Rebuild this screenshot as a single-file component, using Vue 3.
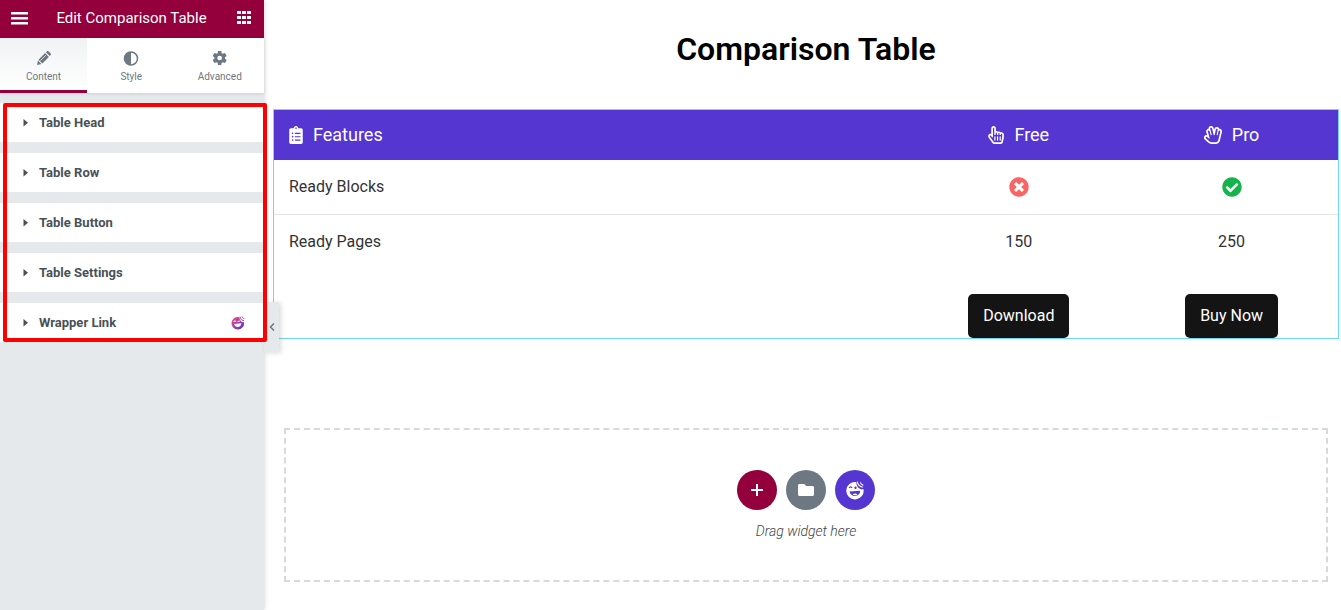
<script setup>
import { ref } from 'vue'

const activeTab = ref('Content')
const tabs = ['Content', 'Style', 'Advanced']
const sections = ['Table Head', 'Table Row', 'Table Button', 'Table Settings', 'Wrapper Link']
</script>

<template>
  <div class="editor">
    <aside class="panel">
      <header class="panel-head">
        <button class="bare" type="button" aria-label="Menu">
          <svg width="18" height="18" viewBox="0 0 18 18" fill="currentColor">
            <path d="M1 3h17v2.400H1zM1 8h17v2.400H1zM1 13h17v2.400H1z" />
          </svg>
        </button>
        <h2>Edit Comparison Table</h2>
        <button class="bare" type="button" aria-label="Widgets">
          <svg width="14" height="14" viewBox="0 0 14 14" fill="currentColor">
            <path d="M0 0h4v3H0zM5 0h4v3H5zM10 0h4v3h-4zM0 5h4v3H0zM5 5h4v3H5zM10 5h4v3h-4zM0 10h4v3H0zM5 10h4v3H5zM10 10h4v3h-4z" />
          </svg>
        </button>
      </header>

      <nav class="tabs">
        <button
          v-for="tab in tabs"
          :key="tab"
          type="button"
          class="tab"
          :class="{ active: tab === activeTab }"
          @click="activeTab = tab"
        >
          <svg v-if="tab === 'Content'" width="16" height="16" viewBox="0 0 16 16" fill="currentColor">
            <path d="M1 15l.9-4.400 3.500 3.500zM2.500 9.700l6.600-6.600 3.800 3.800L6.300 13.500zM9.900 2.300l.8-.8c.6-.6 1.400-.6 2 0l1.800 1.800c.6.6.6 1.400 0 2l-.8.8z" />
            <path d="M4.300 10.700l5.500-5.500" stroke="#fff" stroke-width=".7" />
          </svg>
          <svg v-else-if="tab === 'Style'" width="16" height="16" viewBox="0 0 16 16">
            <circle cx="8" cy="8.500" r="6.500" fill="none" stroke="currentColor" stroke-width="1.500" />
            <path d="M8 2a6.500 6.500 0 0 0 0 13z" fill="currentColor" />
          </svg>
          <svg v-else width="16" height="16" viewBox="0 0 24 24" fill="currentColor">
            <path fill-rule="evenodd" d="M19.400 13c.1-.3.1-.6.1-1s0-.7-.1-1l2.300-1.700c.2-.2.300-.5.1-.7l-2.200-3.800c-.1-.2-.4-.3-.7-.2l-2.600 1.100c-.6-.4-1.100-.8-1.800-1l-.4-2.800c0-.3-.2-.4-.5-.4H9.400c-.3 0-.5.1-.5.400l-.4 2.800c-.7.2-1.200.6-1.800 1L4.100 4.600c-.3-.1-.6 0-.7.2L1.200 8.600c-.1.2-.1.5.1.7L3.600 11c-.1.3-.1.6-.1 1s0 .7.1 1l-2.300 1.700c-.2.2-.2.5-.1.7l2.200 3.800c.1.2.4.3.7.2l2.600-1.100c.6.4 1.100.8 1.800 1l.4 2.800c0 .3.2.4.5.4h4.200c.3 0 .5-.1.5-.4l.4-2.800c.7-.2 1.200-.6 1.800-1l2.600 1.100c.3.1.6 0 .7-.2l2.200-3.800c.2-.2.1-.5-.1-.7zM11.500 15.500a3.500 3.500 0 1 1 0-7 3.500 3.500 0 0 1 0 7z" />
          </svg>
          <span>{{ tab }}</span>
        </button>
      </nav>

      <div class="sections">
        <button v-for="name in sections" :key="name" type="button" class="section">
          <svg class="caret" width="5" height="8" viewBox="0 0 5 8" fill="currentColor"><path d="M.5 0L5 3.700 .5 7.400z" /></svg>
          <span>{{ name }}</span>
          <svg v-if="name === 'Wrapper Link'" class="happy-mark" width="14" height="14" viewBox="0 0 20 20">
            <defs>
              <linearGradient id="happy" x1="0" y1="0" x2="1" y2="1">
                <stop offset=".15" stop-color="#e2498a" />
                <stop offset="1" stop-color="#562dd4" />
              </linearGradient>
            </defs>
            <path fill="url(#happy)" d="M12 1.700A9 9 0 1 0 18.600 9c-3.300.4-6.300-2.500-6.600-7.300z" />
            <path d="M13 1c.2 3.200 2.200 5.300 5.600 5.700M16 .8c.2 1.600 1.200 2.600 3 3" fill="none" stroke="#a23cae" stroke-width="1.400" />
            <path fill="#fff" d="M4.500 11.300l10.300-.8c0 6.500-9.300 7-10.300.8z" />
            <path d="M4 8.300c.6-1.700 2.400-1.700 3 0M9.500 7.800l3-.8" stroke="#fff" stroke-width="1.500" fill="none" />
          </svg>
        </button>
      </div>

      <button class="collapse" type="button" aria-label="Hide panel">
        <svg width="6" height="8" viewBox="0 0 6 8" fill="none" stroke="currentColor" stroke-width="1.500"><path d="M5 .5L1.500 4 5 7.500" /></svg>
      </button>
    </aside>

    <main class="canvas">
      <h1>Comparison Table</h1>

      <div class="widget">
        <table>
          <thead>
            <tr>
              <th scope="col">
                <span class="label">
                  <svg width="14" height="18" viewBox="0 0 384 512" fill="currentColor"><path d="M336 64h-80c0-35.300-28.700-64-64-64s-64 28.700-64 64H48C21.500 64 0 85.500 0 112v352c0 26.500 21.500 48 48 48h288c26.500 0 48-21.500 48-48V112c0-26.500-21.500-48-48-48zM96 424c-13.300 0-24-10.700-24-24s10.700-24 24-24 24 10.700 24 24-10.700 24-24 24zm0-96c-13.300 0-24-10.700-24-24s10.700-24 24-24 24 10.700 24 24-10.700 24-24 24zm0-96c-13.300 0-24-10.700-24-24s10.700-24 24-24 24 10.700 24 24-10.700 24-24 24zm96-192c13.300 0 24 10.700 24 24s-10.700 24-24 24-24-10.700-24-24 10.700-24 24-24zm128 368c0 4.400-3.600 8-8 8H168c-4.400 0-8-3.600-8-8v-16c0-4.400 3.600-8 8-8h144c4.400 0 8 3.600 8 8v16zm0-96c0 4.400-3.600 8-8 8H168c-4.400 0-8-3.600-8-8v-16c0-4.400 3.600-8 8-8h144c4.400 0 8 3.600 8 8v16zm0-96c0 4.400-3.600 8-8 8H168c-4.400 0-8-3.600-8-8v-16c0-4.400 3.600-8 8-8h144c4.400 0 8 3.600 8 8v16z" /></svg>
                  Features
                </span>
              </th>
              <th scope="col">
                <span class="label">
                  <svg width="16" height="18" viewBox="0 0 448 512" fill="currentColor"><path d="M358.182 179.361c-19.493-24.768-52.679-31.945-79.872-19.098-15.127-15.687-36.182-22.487-56.595-19.629V67c0-36.944-29.736-67-66.286-67S89.143 30.056 89.143 67v161.129c-19.909-7.410-43.272-5.094-62.083 8.872-29.355 21.795-35.793 63.333-14.550 93.152l109.699 154.001C134.632 501.590 154.741 512 176 512h178.286c30.802 0 57.574-21.500 64.557-51.797l27.429-118.999A67.873 67.873 0 0 0 448 326v-84c0-46.844-46.625-79.273-89.818-62.639zM80.985 279.697l27.126 38.079c8.995 12.626 29.031 6.287 29.031-9.283V67c0-25.120 36.571-25.160 36.571 0v175c0 8.836 7.163 16 16 16h6.857c8.837 0 16-7.164 16-16v-35c0-25.120 36.571-25.160 36.571 0v35c0 8.836 7.163 16 16 16H272c8.837 0 16-7.164 16-16v-21c0-25.120 36.571-25.160 36.571 0v21c0 8.836 7.163 16 16 16h6.857c8.837 0 16-7.164 16-16 0-25.121 36.571-25.160 36.571 0v84c0 1.488-.169 2.977-.502 4.423l-27.430 119.001c-1.978 8.582-9.290 14.576-17.782 14.576H176c-5.769 0-11.263-2.878-14.697-7.697l-109.712-154c-14.406-20.223 14.994-42.818 29.394-22.606zM176.143 400v-96c0-8.837 6.268-16 14-16h6c7.732 0 14 7.163 14 16v96c0 8.837-6.268 16-14 16h-6c-7.733 0-14-7.163-14-16zm75.428 0v-96c0-8.837 6.268-16 14-16h6c7.732 0 14 7.163 14 16v96c0 8.837-6.268 16-14 16h-6c-7.732 0-14-7.163-14-16zM327 400v-96c0-8.837 6.268-16 14-16h6c7.732 0 14 7.163 14 16v96c0 8.837-6.268 16-14 16h-6c-7.732 0-14-7.163-14-16z" /></svg>
                  Free
                </span>
              </th>
              <th scope="col">
                <span class="label">
                  <svg width="18" height="18" viewBox="0 0 512 512" fill="currentColor"><path d="M501.030 116.176c-19.390-31.508-51.244-35.728-66.310-35.018-14.113-50.810-62.004-54.080-70.738-54.080a74.031 74.031 0 0 0-72.238 58.916l-4.646 22.660-13.684-53.207c-9.096-35.371-46.412-64.051-89.660-53.072a73.897 73.897 0 0 0-55.121 78.947 73.683 73.683 0 0 0-64.850 94.422l24.359 82.197c-38.240-7.545-62.797 16.184-68.115 21.848a73.679 73.679 0 0 0 3.199 104.193l91.365 85.977A154.164 154.164 0 0 0 220.623 512h107.455a127.301 127.301 0 0 0 124.261-98.139l57.623-241.963a73.203 73.203 0 0 0-8.932-55.722zm-37.760 44.605L405.648 402.748a79.466 79.466 0 0 1-77.570 61.260H220.623a106.341 106.341 0 0 1-73.137-28.998l-91.369-85.980c-24.773-23.303 10.494-60.899 35.279-37.491l51.123 48.107c5.426 5.109 13.482.717 13.482-5.826a246.799 246.799 0 0 0-10.178-70.152l-36.014-121.539c-9.732-32.883 39.699-47.271 49.387-14.625l31.344 105.779c5.594 18.904 33.781 10.713 28.965-8.008L177.064 80.237c-8.504-33.104 41.432-45.646 49.865-12.836l47.326 184.035c4.428 17.242 29.162 16.504 32.711-.805l31.791-154.971c6.811-33.108 57.517-24.107 50.119 11.963l-28.549 139.166c-3.723 18.109 23.668 24.631 28.057 6.217L413.185 148.860c7.840-33.348 57.946-21.122 50.085 11.921z" /></svg>
                  Pro
                </span>
              </th>
            </tr>
          </thead>
          <tbody>
            <tr>
              <td>Ready Blocks</td>
              <td>
                <svg class="no" role="img" aria-label="Not included" width="20" height="20" viewBox="0 0 512 512" fill="currentColor"><path d="M256 8C119 8 8 119 8 256s111 248 248 248 248-111 248-248S393 8 256 8zm121.600 313.100c4.700 4.700 4.700 12.300 0 17L338 377.600c-4.700 4.700-12.300 4.700-17 0L256 312l-65.100 65.600c-4.700 4.700-12.300 4.700-17 0L134.400 338c-4.700-4.700-4.700-12.300 0-17l65.600-65-65.600-65.100c-4.700-4.700-4.700-12.300 0-17l39.600-39.600c4.700-4.700 12.300-4.700 17 0l65 65.700 65.100-65.600c4.700-4.700 12.300-4.700 17 0l39.600 39.600c4.700 4.700 4.700 12.300 0 17L312 256l65.600 65.100z" /></svg>
              </td>
              <td>
                <svg class="yes" role="img" aria-label="Included" width="20" height="20" viewBox="0 0 512 512" fill="currentColor"><path d="M504 256c0 136.967-111.033 248-248 248S8 392.967 8 256 119.033 8 256 8s248 111.033 248 248zM227.314 387.314l184-184c6.248-6.248 6.248-16.379 0-22.627l-22.627-22.627c-6.248-6.249-16.379-6.249-22.628 0L216 308.118l-70.059-70.059c-6.248-6.248-16.379-6.248-22.628 0l-22.627 22.627c-6.248 6.248-6.248 16.379 0 22.627l104 104c6.249 6.249 16.379 6.249 22.628.001z" /></svg>
              </td>
            </tr>
            <tr>
              <td>Ready Pages</td>
              <td>150</td>
              <td>250</td>
            </tr>
          </tbody>
          <tfoot>
            <tr>
              <td></td>
              <td><a class="buy" href="#">Download</a></td>
              <td><a class="buy" href="#">Buy Now</a></td>
            </tr>
          </tfoot>
        </table>
      </div>

      <section class="dropzone">
        <div class="actions">
          <button class="round add" type="button" aria-label="Add section">
            <svg width="14" height="14" viewBox="0 0 14 14" fill="currentColor"><path d="M6 1h2v5h5v2H8v5H6V8H1V6h5z" /></svg>
          </button>
          <button class="round folder" type="button" aria-label="Add template">
            <svg width="16" height="14" viewBox="0 0 16 14" fill="currentColor"><path d="M1.500 1h5l1.500 2h6.500c.8 0 1.500.7 1.500 1.500v7c0 .8-.7 1.500-1.500 1.500h-13C.7 13 0 12.300 0 11.500v-9C0 1.700.7 1 1.500 1z" /></svg>
          </button>
          <button class="round happy" type="button" aria-label="Add Happy template">
            <svg width="20" height="20" viewBox="0 0 20 20">
              <path fill="#fff" d="M11.300 2.200A8.700 8.700 0 1 0 18.500 9.200c-4 .6-7-2.200-7.200-7z" />
              <path d="M12.300 1.600c.4 3 2.300 5 5.500 5.600M15.300 2.400c.5 1.500 1.500 2.500 3.100 2.900" fill="none" stroke="#fff" stroke-width="1.100" />
              <path fill="#5636d1" d="M4.500 11.500l10.700-.7c-.2 6.500-9.500 7-10.700.7z" />
              <path fill="#fff" d="M7.500 14.500c1.500-1.200 3.500-1.200 5-.3-1.300 1.400-3.500 1.500-5 .3z" />
              <path d="M4.200 8c.6-1.500 2.200-1.500 2.800 0" stroke="#5636d1" stroke-width="1.200" fill="none" />
              <circle cx="10.500" cy="7.800" r="1.200" fill="#5636d1" />
            </svg>
          </button>
        </div>
        <p>Drag widget here</p>
      </section>
    </main>
  </div>
</template>

<style>
body {
  margin: 0;
  background: #fff;
}
</style>

<style scoped>
.editor {
  display: flex;
  min-height: 100vh;
  font-family: Roboto, "Liberation Sans", sans-serif;
}

button {
  margin: 0;
  padding: 0;
  border: 0;
  background: none;
  font-family: inherit;
  cursor: pointer;
}

svg {
  display: block;
  flex: none;
}

.panel {
  position: relative;
  z-index: 1;
  flex: none;
  box-sizing: border-box;
  width: 264px;
  background: #e6e9ec;
  box-shadow: 0 0 5px rgba(0, 0, 0, 0.2);
}

.panel-head {
  display: flex;
  align-items: center;
  justify-content: space-between;
  box-sizing: border-box;
  height: 38px;
  padding: 0 13px 2px 10px;
  background: #93003c;
  color: #fff;
}

.bare {
  color: inherit;
}

.panel-head h2 {
  margin: 0;
  padding-right: 2px;
  font-size: 15px;
  font-weight: 400;
  line-height: 20px;
}

.tabs {
  display: grid;
  grid-template-columns: 87px 1fr 1fr;
  background: #fff;
  box-shadow: 0 1px 3px rgba(0, 0, 0, 0.1);
}

.tab {
  display: flex;
  flex-direction: column;
  align-items: center;
  gap: 4px;
  height: 55px;
  padding-top: 12px;
  box-sizing: border-box;
  border-bottom: 3px solid transparent;
  color: #6d7882;
  font-size: 10px;
  line-height: 13px;
}

.tab.active {
  border-color: #93003c;
  background: linear-gradient(#f1f2f4, #fff);
}

.sections {
  position: relative;
  display: flex;
  flex-direction: column;
  gap: 11px;
  margin-top: 10px;
}

.sections::after {
  position: absolute;
  inset: 0 -3px 0 3px;
  border: 4px solid #f00;
  border-radius: 2px;
  content: "";
  pointer-events: none;
}

.section {
  display: flex;
  align-items: center;
  gap: 11px;
  height: 39px;
  padding: 0 19px 0 23px;
  background: #fff;
  color: #495157;
  font-size: 13px;
  font-weight: 700;
  line-height: 16px;
}

.happy-mark {
  margin-left: auto;
}

.collapse {
  position: absolute;
  top: 302px;
  left: 264px;
  z-index: -1;
  display: flex;
  align-items: center;
  justify-content: center;
  width: 15px;
  height: 50px;
  background: #e6e9ec;
  box-shadow: 2px 1px 5px rgba(0, 0, 0, 0.15);
  color: #6d7882;
}

.canvas {
  flex: 1;
  min-width: 0;
  padding: 30px 2px 28px 9px;
}

h1 {
  margin: 0 0 41px;
  color: #000;
  font-size: 32px;
  font-weight: 600;
  line-height: 38px;
  text-align: center;
}

.widget {
  border: 1px solid #71d7f7;
}

table {
  width: 100%;
  border-collapse: collapse;
  table-layout: fixed;
}

th,
td {
  box-sizing: border-box;
  width: 20%;
  padding: 0 15px;
  text-align: center;
}

th:first-child,
td:first-child {
  width: 60%;
  text-align: left;
}

th {
  height: 50px;
  padding-top: 2px;
  background: #5636d1;
  color: #fff;
  font-size: 18px;
  font-weight: 400;
  line-height: 22px;
}

.label {
  display: inline-flex;
  align-items: center;
  gap: 10px;
}

td {
  height: 55px;
  color: #333;
  font-size: 16px;
  font-weight: 400;
  line-height: 24px;
}

td svg {
  margin: 0 auto;
}

tbody tr:first-child td {
  height: 54px;
  border-bottom: 1px solid #e5e5e5;
}

.no {
  color: #fa6464;
}

.yes {
  color: #14b44b;
}

tfoot td {
  height: auto;
  padding-top: 25px;
}

.buy {
  display: inline-block;
  padding: 10px 15px;
  border-radius: 5px;
  background: #141414;
  color: #fff;
  font-weight: 400;
  line-height: 24px;
  text-decoration: none;
  vertical-align: top;
}

.dropzone {
  display: flex;
  flex-direction: column;
  align-items: center;
  margin: 89px 11px 0;
  padding: 40px 0;
  border: 2px dashed #d5dadf;
}

.actions {
  display: flex;
  gap: 9px;
}

.round {
  display: flex;
  align-items: center;
  justify-content: center;
  width: 40px;
  height: 40px;
  border-radius: 50%;
  color: #fff;
}

.add {
  background: #93003c;
}

.folder {
  background: #6d7882;
}

.happy {
  background: #5636d1;
}

.dropzone p {
  margin: 12px 0 0;
  color: #40454a;
  font-size: 14px;
  font-style: italic;
  font-weight: 300;
  line-height: 18px;
}
</style>
